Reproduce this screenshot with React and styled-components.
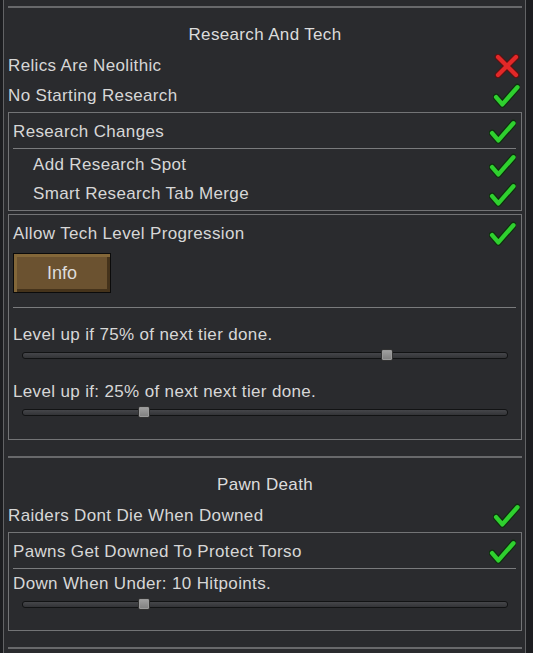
import React from "react";
import styled, { createGlobalStyle } from "styled-components";

const GlobalStyle = createGlobalStyle`
  html, body {
    margin: 0;
    padding: 0;
    background: #1c1d20;
  }
  #root {
    height: 653px;
    overflow: hidden;
  }
`;

const Check = () => (
  <svg width="27" height="25" viewBox="0 0 26 24">
    <polyline points="3,13.5 9,20.5 23.5,4" fill="none" stroke="#0e300e" strokeWidth="6.5" strokeLinecap="round" strokeLinejoin="round" />
    <polyline points="3,13.5 9,20.5 23.5,4" fill="none" stroke="#2fd02f" strokeWidth="4.2" strokeLinecap="round" strokeLinejoin="round" />
  </svg>
);

const Cross = () => (
  <svg width="26" height="24" viewBox="0 0 26 24">
    <g fill="none" strokeLinecap="round">
      <line x1="4" y1="3" x2="22" y2="21" stroke="#5a1212" strokeWidth="6.5" />
      <line x1="22" y1="3" x2="4" y2="21" stroke="#5a1212" strokeWidth="6.5" />
      <line x1="4" y1="3" x2="22" y2="21" stroke="#e32828" strokeWidth="4.2" />
      <line x1="22" y1="3" x2="4" y2="21" stroke="#e32828" strokeWidth="4.2" />
    </g>
  </svg>
);

const Panel = styled.div`
  margin-left: 3px;
  width: 514px;
  height: 653px;
  box-sizing: content-box;
  padding: 6px 3px 0 4px;
  border-left: 1px solid #626365;
  border-right: 1px solid #626365;
  background: #2a2b2e;
  font-family: "Liberation Sans", Arial, sans-serif;
  font-size: 17px;
  letter-spacing: 0.35px;
  color: #d7d7d7;
`;

const Separator = styled.div`
  height: 2px;
  background: #68696b;
  margin-top: ${(p) => p.$top || 0}px;
`;

const Title = styled.div`
  box-sizing: border-box;
  height: 30px;
  padding-top: 2px;
  line-height: 28px;
  margin-top: ${(p) => p.$top || 11}px;
  text-align: center;
  color: #dcdcdc;
`;

const Row = styled.div`
  display: flex;
  align-items: center;
  justify-content: space-between;
  box-sizing: border-box;
  height: ${(p) => p.$h || 30}px;
  padding-top: 3px;
  padding-left: ${(p) => p.$indent || 0}px;
  padding-right: ${(p) => p.$right ?? 2}px;

  svg {
    flex: none;
  }
`;

const Box = styled.div`
  border: 1px solid #737476;
  margin-top: ${(p) => p.$mt ?? 3}px;
  padding: ${(p) => p.$pt || 2}px 5px ${(p) => p.$pb || 2}px 4px;
`;

const Divider = styled.div`
  height: 1px;
  background: #7a7b7d;
  margin-top: ${(p) => p.$top || 3}px;
`;

const InfoButton = styled.button`
  display: block;
  width: 98px;
  height: 40px;
  margin-top: 6px;
  padding: 0;
  border: 1px solid #0b0b0b;
  background: #6b5230;
  box-shadow:
    inset 3px 3px 0 #836739,
    inset -3px -3px 0 #45331b;
  font-family: "Liberation Sans", Arial, sans-serif;
  font-size: 18px;
  color: #dddddd;
  cursor: pointer;
`;

const Label = styled.div`
  box-sizing: border-box;
  height: 24px;
  padding-top: 2px;
  line-height: 24px;
  margin-top: ${(p) => p.$top || 0}px;
`;

const SliderWrap = styled.div`
  position: relative;
  height: 20px;
  margin: 0 8px 0 9px;
  display: flex;
  align-items: center;
`;

const Track = styled.div`
  width: 100%;
  height: 5px;
  border-radius: 3px;
  border: 1px solid #121314;
  background: linear-gradient(#45464a, #333437);
`;

const Thumb = styled.div`
  position: absolute;
  top: 4px;
  width: 12px;
  height: 12px;
  margin-left: -6px;
  box-sizing: border-box;
  border: 1px solid #323232;
  border-radius: 2px;
  background: linear-gradient(#a2a2a2, #7e7e7e);
  box-shadow: inset 0 0 0 1px #9a9a9a;
`;

const Slider = ({ value }) => (
  <SliderWrap>
    <Track />
    <Thumb style={{ left: `${value * 100}%` }} />
  </SliderWrap>
);

export default function App() {
  return (
    <>
      <GlobalStyle />
      <Panel>
        <Separator />
        <Title>Research And Tech</Title>
        <Row>
          Relics Are Neolithic
          <Cross />
        </Row>
        <Row>
          No Starting Research
          <Check />
        </Row>

        <Box $pb={3}>
          <Row $right={0}>
            Research Changes
            <Check />
          </Row>
          <Divider />
          <Row $h={29} $indent={20} $right={0}>
            Add Research Spot
            <Check />
          </Row>
          <Row $h={29} $indent={20} $right={0}>
            Smart Research Tab Merge
            <Check />
          </Row>
        </Box>

        <Box $pt={2} $pb={17}>
          <Row $right={0}>
            Allow Tech Level Progression
            <Check />
          </Row>
          <InfoButton>Info</InfoButton>
          <Divider $top={14} />
          <Label $top={13}>Level up if 75% of next tier done.</Label>
          <Slider value={0.75} />
          <Label $top={13}>Level up if: 25% of next next tier done.</Label>
          <Slider value={0.25} />
        </Box>

        <Separator $top={16} />
        <Title>Pawn Death</Title>
        <Row>
          Raiders Dont Die When Downed
          <Check />
        </Row>
        <Box $mt={3} $pb={16}>
          <Row $right={0}>
            Pawns Get Downed To Protect Torso
            <Check />
          </Row>
          <Divider />
          <Label $top={1}>Down When Under: 10 Hitpoints.</Label>
          <Slider value={0.25} />
        </Box>
        <Separator $top={16} />
      </Panel>
    </>
  );
}
